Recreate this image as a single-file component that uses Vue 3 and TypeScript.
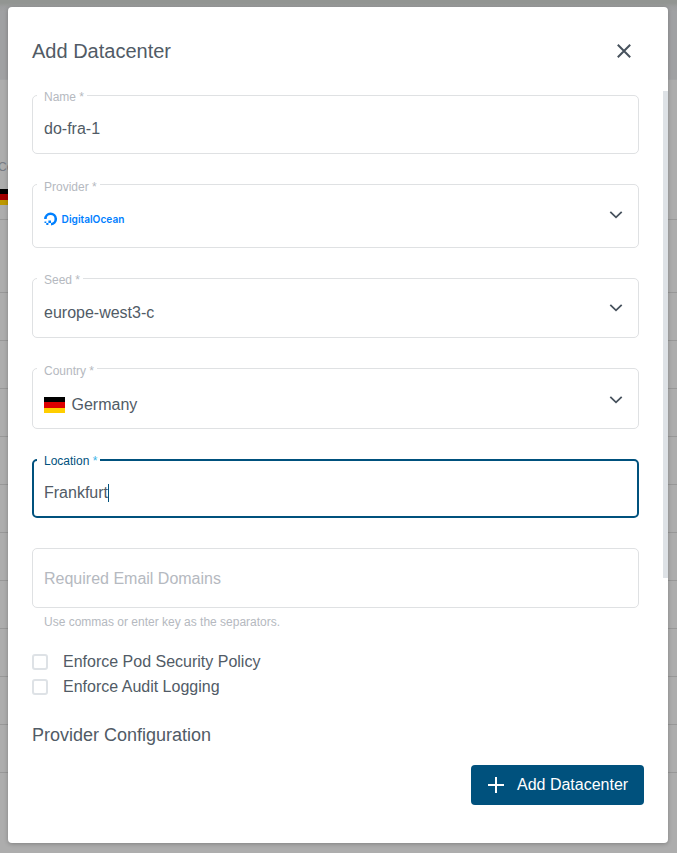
<script setup lang="ts">
import { ref } from 'vue'

interface Field {
  id: string
  label: string
  value: string
  select?: boolean
  focused?: boolean
}

const fields: Field[] = [
  { id: 'name', label: 'Name', value: 'do-fra-1' },
  { id: 'provider', label: 'Provider', value: 'DigitalOcean', select: true },
  { id: 'seed', label: 'Seed', value: 'europe-west3-c', select: true },
  { id: 'country', label: 'Country', value: 'Germany', select: true },
  { id: 'location', label: 'Location', value: 'Frankfurt', focused: true },
]

const options = ref([
  { label: 'Enforce Pod Security Policy', checked: false },
  { label: 'Enforce Audit Logging', checked: false },
])

const rows = 12
</script>

<template>
  <div class="screen">
    <div class="page">
      <div class="toolbar"></div>
      <div class="table-head"><span>Co</span></div>
      <div v-for="n in rows" :key="n" class="row" :class="{ first: n === 1, second: n === 2 }">
        <span v-if="n === 1" class="flag dim"><i></i><i></i><i></i></span>
      </div>
    </div>

    <section class="dialog">
      <header class="head">
        <h1>Add Datacenter</h1>
        <button class="close" type="button" aria-label="Close">
          <svg width="16" height="16" viewBox="0 0 16 16">
            <path d="M1.8 1.8 14.2 14.2M14.2 1.8 1.8 14.2" />
          </svg>
        </button>
      </header>

      <div class="scroll">
        <div class="form">
          <div v-for="f in fields" :key="f.id" class="field" :class="[f.id, { focused: f.focused }]">
            <label class="label">{{ f.label }} <span class="star">*</span></label>
            <svg v-if="f.id === 'provider'" class="brand" width="84" height="16" viewBox="0 0 84 16">
              <path class="ring" d="M7 13.2A5.2 5.2 0 1 0 1.4 8" />
              <path class="blocks" d="M4.4 9.6H7V12.1H4.4ZM2.3 12.1H4.4V14.1H2.3ZM.5 10.4H2.3V12.1H.5Z" />
              <text x="17.6" y="11.7" textLength="62.8" lengthAdjust="spacingAndGlyphs">{{ f.value }}</text>
            </svg>
            <template v-else>
              <span v-if="f.id === 'country'" class="flag"><i></i><i></i><i></i></span>
              <span class="value">{{ f.value }}</span>
              <span v-if="f.focused" class="caret"></span>
            </template>
            <svg v-if="f.select" class="chevron" width="14" height="10" viewBox="0 0 14 10">
              <path d="M1.3 1.8 7 7.3 12.7 1.8" />
            </svg>
          </div>

          <div class="field email"><span class="value">Required Email Domains</span></div>
          <p class="hint">Use commas or enter key as the separators.</p>

          <div class="options">
            <label v-for="o in options" :key="o.label" class="option">
              <input v-model="o.checked" type="checkbox" />
              <span>{{ o.label }}</span>
            </label>
          </div>

          <h2>Provider Configuration</h2>
        </div>
        <div class="thumb"></div>
      </div>

      <footer class="foot">
        <button class="submit" type="button">
          <svg width="16" height="16" viewBox="0 0 16 16"><path d="M8 0V16M0 8H16" /></svg>
          <span>Add Datacenter</span>
        </button>
      </footer>
    </section>
  </div>
</template>

<style>
body {
  margin: 0;
  overflow: hidden;
}
</style>

<style scoped>
* {
  box-sizing: border-box;
}

.screen {
  display: grid;
  width: 677px;
  height: 853px;
  overflow: hidden;
  background: #adadad;
  color: #515b66;
  font-family: "Liberation Sans", Arial, sans-serif;
  font-size: 16px;
}

.page,
.dialog {
  grid-area: 1 / 1;
}

.toolbar {
  height: 80px;
  background: linear-gradient(#929592 0, #929592 3px, #9d9e9f 7px, #a0a1a3 12px);
  border-bottom: 1px solid #a3a4a6;
}

.table-head {
  height: 100px;
  padding-top: 80px;
  font-size: 12px;
  line-height: 14px;
  color: #787c84;
}

.table-head span {
  margin-left: -2px;
}

.row {
  height: 48px;
  border-bottom: 1px solid #989898;
}

.row.first {
  height: 40px;
  padding-top: 9px;
}

.row.second {
  height: 73px;
}

.flag {
  display: flex;
  flex-direction: column;
  flex: none;
  width: 21px;
  height: 16px;
}

.flag i {
  flex: 1;
  background: #000;
}

.flag i:nth-child(2) {
  background: #d00;
}

.flag i:nth-child(3) {
  background: #ffce00;
}

.flag.dim {
  width: 16px;
}

.flag.dim i:nth-child(2) {
  background: #a30000;
}

.flag.dim i:nth-child(3) {
  background: #bd9800;
}

.dialog {
  z-index: 1;
  display: flex;
  flex-direction: column;
  width: 660px;
  height: 836px;
  margin: 7px 0 0 8px;
  border-radius: 4px;
  background: #fff;
  box-shadow: 0 1px 4px rgba(0, 0, 0, 0.25);
}

.head {
  display: flex;
  align-items: center;
  justify-content: space-between;
  height: 84px;
  padding: 4px 36px 0 24px;
}

h1 {
  margin: 0;
  font-size: 20px;
  line-height: 24px;
  font-weight: 400;
}

.close {
  display: flex;
  padding: 0;
  border: 0;
  background: none;
}

.close svg {
  fill: none;
  stroke: #47525d;
  stroke-width: 2;
}

.scroll {
  display: flex;
  justify-content: space-between;
  height: 658px;
}

.form {
  width: 631px;
  padding: 4px 0 0 24px;
}

.thumb {
  width: 5px;
  height: 487px;
  background: #dee2e6;
}

.field {
  position: relative;
  display: flex;
  align-items: center;
  width: 607px;
  height: 59px;
  margin-bottom: 30px;
  padding: 9px 15px 0 11px;
  border: 1px solid #dfe1e3;
  border-radius: 5px;
  line-height: 20px;
}

.label {
  position: absolute;
  top: -7px;
  left: 4px;
  padding: 0 3px 0 7px;
  background: #fff;
  color: #b5b9c0;
  font-size: 12px;
  line-height: 16px;
  white-space: pre;
}

.provider {
  height: 64px;
  padding-top: 6px;
}

.seed {
  height: 60px;
  padding-top: 9px;
}

.country {
  height: 61px;
  padding-top: 13px;
}

.provider .label,
.country .label {
  top: -6px;
}

.focused {
  padding: 9px 14px 0 10px;
  border: 2px solid #00517d;
}

.focused .label {
  top: -8px;
  left: 3px;
  color: #00517d;
}

.focused .star {
  color: #3cb4e7;
}

.caret {
  width: 1px;
  height: 18px;
  background: #00517d;
}

.country .flag {
  margin-right: 6.5px;
}

.brand {
  flex: none;
}

.brand text {
  fill: #0080ff;
  font: 600 10.5px Inter, sans-serif;
}

.brand .ring {
  fill: none;
  stroke: #0080ff;
  stroke-width: 2.6;
}

.brand .blocks {
  fill: #0080ff;
}

.chevron {
  margin-left: auto;
  fill: none;
  stroke: #47525d;
  stroke-width: 1.8;
}

.provider .chevron,
.seed .chevron {
  margin-bottom: 9px;
}

.country .chevron {
  margin-bottom: 10px;
}

.email {
  height: 60px;
  margin-bottom: 6px;
  padding-top: 2px;
  color: #b5b9c0;
}

.hint {
  margin: 0 0 0 12px;
  color: #b5b9c0;
  font-size: 12px;
  line-height: 16px;
}

.options {
  display: flex;
  flex-direction: column;
  margin-top: 19px;
}

.option {
  display: flex;
  align-items: center;
  gap: 15px;
  height: 25px;
  line-height: 25px;
}

.option input {
  width: 16px;
  height: 16px;
  margin: 1px 0 0;
  appearance: none;
  border: 2px solid #dee2e6;
  border-radius: 3px;
}

h2 {
  margin: 24px 0 0;
  font-size: 18px;
  line-height: 24px;
  font-weight: 400;
}

.foot {
  display: flex;
  justify-content: flex-end;
  padding: 16px 24px 0 0;
}

.submit {
  display: flex;
  align-items: center;
  gap: 13px;
  width: 173px;
  height: 40px;
  padding: 0 0 0 17px;
  border: 0;
  border-radius: 4px;
  background: #00517d;
  color: #fff;
  font: inherit;
}

.submit svg {
  fill: none;
  stroke: #fff;
  stroke-width: 2;
}
</style>
